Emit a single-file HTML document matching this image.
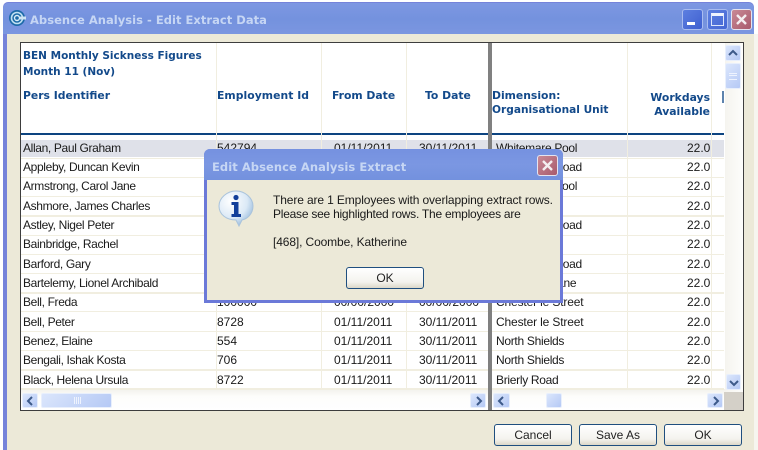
<!DOCTYPE html>
<html><head><meta charset="utf-8"><title>Absence Analysis</title>
<style>
html,body{margin:0;padding:0;background:#fff;width:758px;height:450px;overflow:hidden}
#r{position:absolute;left:0;top:0;width:758px;height:450px;overflow:hidden;filter:blur(.35px);font-family:"Liberation Sans",sans-serif;font-size:12px;color:#1a1a1a}
#r div,#r svg{position:absolute}
.t{white-space:nowrap;line-height:14px}
.n{white-space:nowrap;line-height:14px;letter-spacing:-.35px;left:23px}
.d{white-space:nowrap;line-height:14px;letter-spacing:-.3px;left:496px}
.v{white-space:nowrap;line-height:14px;left:687px}
.h{font-family:"DejaVu Sans",sans-serif;font-weight:bold;font-size:10.8px;color:#12498a;white-space:nowrap;line-height:14px}
.rw{left:21px;width:703px;height:19.3px}
.sep{left:21px;width:703px;height:1.4px;background:#f1eee0}
.col{width:1.4px;background:#f1eee0;top:43px;height:346px}
.sb{background:linear-gradient(135deg,#dbe6fc,#b5c9f5);border:1px solid #e8effc;border-radius:2px;box-sizing:border-box}
.btn{background:linear-gradient(#fff,#f4f3ee 70%,#dcd8c8);border:1px solid #1f4f7f;border-radius:3px;box-sizing:border-box;text-align:center;font-size:12px;line-height:20px;color:#222}
.x{background:linear-gradient(135deg,#c98a96,#a85a6c);border:1px solid #e4e4f0;border-radius:3px;box-sizing:border-box}
</style></head><body><div id="r">

<!-- main window -->
<div style="left:3px;top:2px;width:751px;height:450px;background:#7583da;border-radius:5px 5px 0 0"></div>
<div style="left:3px;top:3px;width:751px;height:31px;background:linear-gradient(#7d97e2,#7492de 50%,#7b96e0);border-radius:5px 5px 0 0"></div>
<div style="left:7px;top:34px;width:747px;height:416px;background:#ece9d8"></div>
<div style="left:754px;top:34px;width:4px;height:416px;background:#f6f5ef"></div>

<svg style="left:8px;top:9px" width="18" height="18" viewBox="0 0 18 18"><circle cx="9" cy="9" r="8" fill="#1c6aa8"/><circle cx="9" cy="9" r="5.5" fill="none" stroke="#bfe0f2" stroke-width="1.6"/><circle cx="9" cy="9" r="2.5" fill="none" stroke="#d9eef8" stroke-width="1.4"/><rect x="12" y="7.5" width="6" height="3" fill="#cfe3f2"/></svg>
<div class="t" style="left:30px;top:13px;font-family:'DejaVu Sans',sans-serif;font-weight:bold;font-size:11.5px;letter-spacing:.03px;color:#c6d6f4">Absence Analysis - Edit Extract Data</div>

<div style="left:682px;top:9px;width:21px;height:21px;background:linear-gradient(135deg,#5d7fe0,#3f60d0);border:1px solid #a9bcf0;border-radius:3px;box-sizing:border-box"><div style="left:4px;top:12px;width:8px;height:3px;background:#fff"></div></div>
<div style="left:707px;top:9px;width:21px;height:21px;background:linear-gradient(135deg,#5d7fe0,#4567d4);border:1px solid #a9bcf0;border-radius:3px;box-sizing:border-box"><div style="left:3px;top:3px;width:13px;height:13px;border:1px solid #dde6fb;border-top:3px solid #eef3fe;box-sizing:border-box"></div></div>
<div class="x" style="left:731px;top:9px;width:21px;height:21px"><svg style="left:3px;top:3px" width="13" height="13" viewBox="0 0 13 13"><path d="M2 2L11 11M11 2L2 11" stroke="#f4eef0" stroke-width="2.4" fill="none"/></svg></div>

<!-- grid -->
<div style="left:20px;top:42px;width:724px;height:369px;background:#fff;border:1px solid #3d3d3d;box-sizing:border-box"></div>
<div style="left:21px;top:389px;width:704px;height:21px;background:linear-gradient(#f2f1ec,#fdfdfb 35%,#fff)"></div>
<div style="left:725px;top:43px;width:18px;height:349px;background:linear-gradient(90deg,#f5f4ef,#fdfdfb)"></div>
<div style="left:724px;top:392px;width:19px;height:18px;background:#d4d0c8"></div>

<div style="left:21px;top:133px;width:703px;height:2.4px;background:#0d4480"></div>
<div class="rw" style="top:140px;height:17px;background:#dfe1e9"></div>

<div class="col" style="left:215.5px"></div>
<div class="col" style="left:320.5px"></div>
<div class="col" style="left:406px"></div>
<div class="col" style="left:626.5px"></div>
<div class="col" style="left:711px"></div>

<div class="sep" style="top:157.5px"></div><div class="sep" style="top:176.8px"></div><div class="sep" style="top:196px"></div><div class="sep" style="top:215.3px"></div><div class="sep" style="top:234.6px"></div><div class="sep" style="top:253.8px"></div><div class="sep" style="top:273.1px"></div><div class="sep" style="top:292.4px"></div><div class="sep" style="top:311px"></div><div class="sep" style="top:330.8px"></div><div class="sep" style="top:350px"></div><div class="sep" style="top:369.3px"></div><div class="sep" style="top:388.4px"></div>

<!-- headers -->
<div class="h" style="left:23px;top:49px;font-size:10.5px">BEN Monthly Sickness Figures</div>
<div class="h" style="left:23px;top:65px;font-size:10.5px">Month 11 (Nov)</div>
<div class="h" style="left:23px;top:89px">Pers Identifier</div>
<div class="h" style="left:217px;top:89px;letter-spacing:.05px">Employment Id</div>
<div class="h" style="left:332px;top:89px">From Date</div>
<div class="h" style="left:425px;top:89px">To Date</div>
<div class="h" style="left:492px;top:89px">Dimension:</div>
<div class="h" style="left:492px;top:103px;font-size:10.6px">Organisational Unit</div>
<div class="h" style="left:610px;width:100px;text-align:right;top:91px">Workdays</div>
<div class="h" style="left:610px;width:100px;text-align:right;top:105px">Available</div>
<div style="left:722px;top:91px;width:2px;height:12px;background:#5d83ad"></div>

<!-- names -->
<div class="n" style="top:141px">Allan, Paul Graham</div>
<div class="n" style="top:160px">Appleby, Duncan Kevin</div>
<div class="n" style="top:179px">Armstrong, Carol Jane</div>
<div class="n" style="top:199px">Ashmore, James Charles</div>
<div class="n" style="top:218px">Astley, Nigel Peter</div>
<div class="n" style="top:237px">Bainbridge, Rachel</div>
<div class="n" style="top:257px">Barford, Gary</div>
<div class="n" style="top:276px">Bartelemy, Lionel Archibald</div>
<div class="n" style="top:295px">Bell, Freda</div>
<div class="n" style="top:315px">Bell, Peter</div>
<div class="n" style="top:334px">Benez, Elaine</div>
<div class="n" style="top:353px">Bengali, Ishak Kosta</div>
<div class="n" style="top:373px">Black, Helena Ursula</div>

<!-- ids -->
<div class="t" style="left:217px;top:141px">542794</div>
<div class="t" style="left:217px;top:295px">100000</div>
<div class="t" style="left:217px;top:315px">8728</div>
<div class="t" style="left:217px;top:334px">554</div>
<div class="t" style="left:217px;top:353px">706</div>
<div class="t" style="left:217px;top:373px">8722</div>

<!-- dates -->
<div class="t" style="left:334px;top:141px">01/11/2011</div><div class="t" style="left:419px;top:141px">30/11/2011</div>
<div class="t" style="left:334px;top:295px">00/00/2000</div><div class="t" style="left:419px;top:295px">00/00/2000</div>
<div class="t" style="left:334px;top:315px">01/11/2011</div><div class="t" style="left:419px;top:315px">30/11/2011</div>
<div class="t" style="left:334px;top:334px">01/11/2011</div><div class="t" style="left:419px;top:334px">30/11/2011</div>
<div class="t" style="left:334px;top:353px">01/11/2011</div><div class="t" style="left:419px;top:353px">30/11/2011</div>
<div class="t" style="left:334px;top:373px">01/11/2011</div><div class="t" style="left:419px;top:373px">30/11/2011</div>

<!-- dimension -->
<div class="d" style="top:141px">Whitemare Pool</div>
<div class="d" style="top:160px">Whitemore Road</div>
<div class="d" style="top:179px">Whitemare Pool</div>
<div class="d" style="top:218px">Whitemore Road</div>
<div class="d" style="top:257px">Whitemore Road</div>
<div class="d" style="top:276px">Chester le Lane</div>
<div class="d" style="top:295px;letter-spacing:-.15px">Chester le Street</div>
<div class="d" style="top:315px;letter-spacing:-.15px">Chester le Street</div>
<div class="d" style="top:334px">North Shields</div>
<div class="d" style="top:353px">North Shields</div>
<div class="d" style="top:373px">Brierly Road</div>

<!-- workdays -->
<div class="v" style="top:141px">22.0</div><div class="v" style="top:160px">22.0</div><div class="v" style="top:179px">22.0</div><div class="v" style="top:199px">22.0</div><div class="v" style="top:218px">22.0</div><div class="v" style="top:237px">22.0</div><div class="v" style="top:257px">22.0</div><div class="v" style="top:276px">22.0</div><div class="v" style="top:295px">22.0</div><div class="v" style="top:315px">22.0</div><div class="v" style="top:334px">22.0</div><div class="v" style="top:353px">22.0</div><div class="v" style="top:373px">22.0</div>

<!-- freeze divider -->
<div style="left:488px;top:43px;width:4px;height:367px;background:#808080"></div>

<!-- vertical scrollbar -->
<div class="sb" style="left:725px;top:45px;width:16px;height:16px"><svg style="left:2px;top:3px" width="10" height="8" viewBox="0 0 10 8"><path d="M1 6L5 2L9 6" stroke="#3d5a8a" stroke-width="2" fill="none"/></svg></div>
<div class="sb" style="left:725px;top:63px;width:16px;height:26px"><div style="left:3px;top:9px;width:8px;height:5px;border-top:1px solid #eef3fe;border-bottom:1px solid #eef3fe"></div><div style="left:3px;top:11px;width:8px;height:1px;background:#eef3fe"></div></div>
<div class="sb" style="left:726px;top:374px;width:15px;height:16px"><svg style="left:2px;top:4px" width="10" height="8" viewBox="0 0 10 8"><path d="M1 2L5 6L9 2" stroke="#3d5a8a" stroke-width="2" fill="none"/></svg></div>

<!-- horizontal scrollbars -->
<div class="sb" style="left:22px;top:393px;width:16px;height:15px"><svg style="left:3px;top:2px" width="8" height="10" viewBox="0 0 8 10"><path d="M6 1L2 5L6 9" stroke="#3d5a8a" stroke-width="2" fill="none"/></svg></div>
<div class="sb" style="left:41px;top:393px;width:71px;height:15px"><div style="left:32px;top:3px;width:7px;height:7px;background:repeating-linear-gradient(90deg,#eef3fe 0 1px,transparent 1px 2px)"></div></div>
<div class="sb" style="left:470px;top:393px;width:16px;height:15px"><svg style="left:4px;top:2px" width="8" height="10" viewBox="0 0 8 10"><path d="M2 1L6 5L2 9" stroke="#3d5a8a" stroke-width="2" fill="none"/></svg></div>
<div class="sb" style="left:493px;top:393px;width:17px;height:15px"><svg style="left:3px;top:2px" width="8" height="10" viewBox="0 0 8 10"><path d="M6 1L2 5L6 9" stroke="#3d5a8a" stroke-width="2" fill="none"/></svg></div>
<div class="sb" style="left:546px;top:393px;width:16px;height:15px"></div>
<div class="sb" style="left:707px;top:393px;width:16px;height:15px"><svg style="left:4px;top:2px" width="8" height="10" viewBox="0 0 8 10"><path d="M2 1L6 5L2 9" stroke="#3d5a8a" stroke-width="2" fill="none"/></svg></div>

<!-- bottom buttons -->
<div class="btn" style="left:494px;top:424px;width:78px;height:22px">Cancel</div>
<div class="btn" style="left:579px;top:424px;width:78px;height:22px">Save As</div>
<div class="btn" style="left:664px;top:424px;width:78px;height:22px">OK</div>

<!-- dialog -->
<div style="left:204px;top:149px;width:359px;height:154px;background:#ece9d8;border:3px solid #6b79d8;border-top:0;border-radius:6px 6px 0 0;box-sizing:border-box"></div>
<div style="left:204px;top:149px;width:359px;height:31px;background:linear-gradient(#7591e0,#7b97e2 50%,#7391de);border-radius:6px 6px 0 0"></div>
<div class="t" style="left:212px;top:160px;font-family:'DejaVu Sans',sans-serif;font-weight:bold;font-size:11.5px;letter-spacing:.06px;color:#c6d6f4">Edit Absence Analysis Extract</div>
<div class="x" style="left:537px;top:155px;width:21px;height:21px"><svg style="left:3px;top:3px" width="13" height="13" viewBox="0 0 13 13"><path d="M2 2L11 11M11 2L2 11" stroke="#f4eef0" stroke-width="2.4" fill="none"/></svg></div>

<svg style="left:218px;top:190px" width="37" height="37" viewBox="0 0 37 37"><defs><radialGradient id="g" cx=".35" cy=".3" r=".8"><stop offset="0" stop-color="#fff"/><stop offset=".6" stop-color="#dbe9f6"/><stop offset="1" stop-color="#8fb4d8"/></radialGradient></defs><path d="M18 1C27 1 35 8 35 16C35 24 29 29 24 30L21 36L18 30C9 30 1 25 1 16C1 8 9 1 18 1Z" fill="url(#g)" stroke="#a9c3dc" stroke-width="1"/><circle cx="18" cy="7.5" r="2.6" fill="#123f9a"/><path d="M13.5 12H20.5V24H23V27H13.5V24H16V15H13.5Z" fill="#123f9a"/></svg>

<div class="t" style="left:273px;top:193px;letter-spacing:-.12px">There are 1 Employees with overlapping extract rows.</div>
<div class="t" style="left:273px;top:207px;letter-spacing:-.24px">Please see highlighted rows. The employees are</div>
<div class="t" style="left:273px;top:235px;letter-spacing:-.12px">[468], Coombe, Katherine</div>
<div class="btn" style="left:346px;top:267px;width:78px;height:22px">OK</div>

</div></body></html>
